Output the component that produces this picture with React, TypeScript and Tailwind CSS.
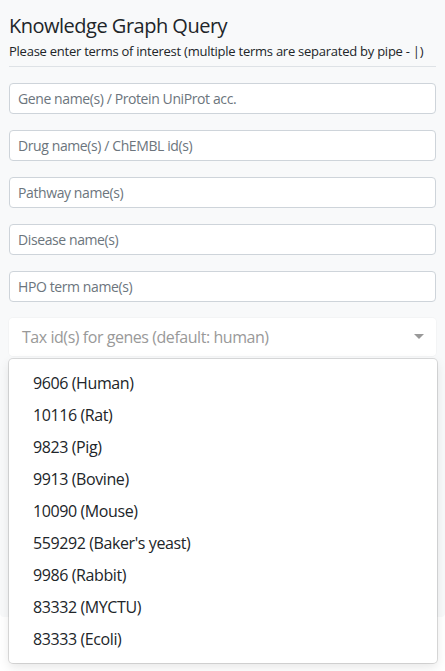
import React from 'react'

const fields = [
  'Gene name(s) / Protein UniProt acc.',
  'Drug name(s) / ChEMBL id(s)',
  'Pathway name(s)',
  'Disease name(s)',
  'HPO term name(s)',
]

const taxOptions = [
  '9606 (Human)',
  '10116 (Rat)',
  '9823 (Pig)',
  '9913 (Bovine)',
  '10090 (Mouse)',
  "559292 (Baker's yeast)",
  '9986 (Rabbit)',
  '83332 (MYCTU)',
  '83333 (Ecoli)',
]

export default function App() {
  return (
    <div className="min-h-[671px] bg-white text-[#212529] font-['Open_Sans',sans-serif]">
      <div className="relative bg-[#f8f9fa] px-[9px] pt-[12px] pb-[40px] rounded-b-[4px]">
        {/* Header */}
        <h1 className="text-[20px] leading-[28px] font-normal tracking-[-0.5px]">Knowledge Graph Query</h1>
        <p className="text-[13px] leading-[18px] tracking-[-0.25px] mt-[2px]">
          Please enter terms of interest (multiple terms are separated by pipe - |)
        </p>
        <hr className="border-t border-[#dee2e6] mt-[6px] mb-[16px]" />

        {/* Term inputs */}
        <div className="flex flex-col gap-[16px]">
          {fields.map((f) => (
            <input
              key={f}
              placeholder={f}
              className="h-[31px] w-full bg-white border border-[#ced4da] rounded-[4px] px-2 text-[14px] tracking-[-0.4px] placeholder:text-[#6c757d] outline-none"
            />
          ))}

          {/* Tax select */}
          <div className="relative">
            <div className="h-[38px] bg-white rounded-[4px] flex items-center justify-between pl-[13px] pr-[12px] shadow-[0_0_0_1px_rgba(0,0,0,0.02)]">
              <span className="text-[16px] tracking-[-0.45px] text-[#999999]">Tax id(s) for genes (default: human)</span>
              <svg width="10" height="6" viewBox="0 0 10 6">
                <polygon points="0,0 10,0 5,5" fill="#999999" />
              </svg>
            </div>

            {/* Open menu */}
            <div className="absolute left-0 right-[-1px] top-[41px] z-10 bg-white rounded-[4px] py-[8px] shadow-[0_0_0_1px_rgba(0,0,0,0.12),0_4px_11px_rgba(0,0,0,0.1)]">
              {taxOptions.map((o) => (
                <div key={o} className="h-[32px] flex items-center pl-[24px] text-[16px] tracking-[-0.4px] text-[#212529]">
                  {o}
                </div>
              ))}
            </div>
          </div>

          {/* Hidden under the menu */}
          <input
            placeholder="Limit"
            className="h-[31px] w-full bg-white border border-[#ced4da] rounded-[4px] px-2 text-[14px] outline-none"
          />
        </div>

        <div className="h-[60px]" />
        <div className="flex flex-col gap-[10px]">
          <button className="h-[29px] w-full rounded-[4px] bg-[#17a2b8] text-white text-[14px]">Search</button>
          <button className="h-[29px] w-full rounded-[4px] bg-[#17a2b8] text-white text-[14px]">Examples</button>
          <button className="h-[36px] w-full rounded-[4px] bg-[#007bff] text-white text-[16px]">Submit</button>
        </div>
      </div>
    </div>
  )
}
